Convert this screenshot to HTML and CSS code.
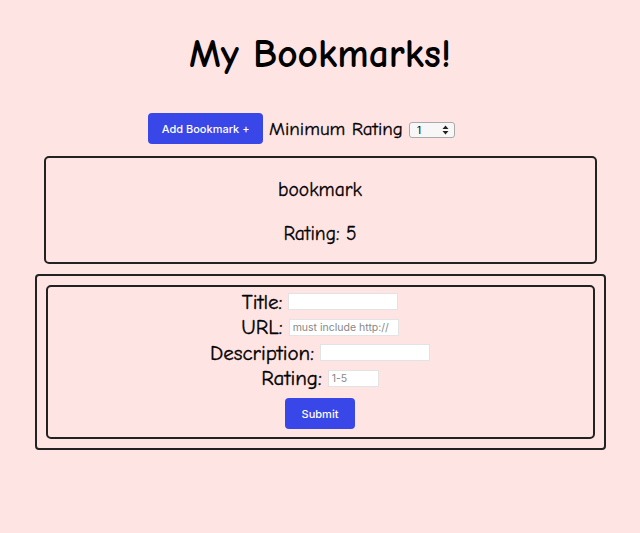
FILE: index.html
```html
<!DOCTYPE html>
<html>
<head>
<meta charset="utf-8">
<link rel="stylesheet" href="styles.css">
</head>
<body>
<div class="app">
  <h1 class="title">My Bookmarks!</h1>
  <div class="toolbar">
    <button class="btn btn-add">Add Bookmark +</button>
    <span class="filter-label">Minimum Rating</span>
    <span class="select"><span class="select-value">1</span><svg class="select-arrows" width="7" height="10" viewBox="0 0 7 10"><path d="M3.5 0.5 L6.5 4 H0.5 Z M3.5 9.5 L6.5 6 H0.5 Z" fill="#222"/></svg></span>
  </div>
  <div class="card">
    <div class="card-title">bookmark</div>
    <div class="card-rating">Rating: 5</div>
  </div>
  <div class="form-outer">
    <form class="form-inner">
      <div class="row"><label>Title:</label><span class="input w110"></span></div>
      <div class="row"><label>URL:</label><span class="input w110 ph">must include http://</span></div>
      <div class="row"><label>Description:</label><span class="input w110"></span></div>
      <div class="row"><label>Rating:</label><span class="input w51 ph">1-5</span></div>
      <button type="button" class="btn btn-submit">Submit</button>
    </form>
  </div>
</div>
</body>
</html>
```
FILE: styles.css
```css
html, body {
  margin: 0;
  padding: 0;
  background: #ffe4e4;
}
body {
  padding: 8px;
  font-family: "Comic Sans MS", "Comic Neue", "DejaVu Sans", sans-serif;
  color: #000;
}
.app {
  display: flex;
  flex-direction: column;
  align-items: center;
}
.title {
  margin: 22px 0 0;
  font-size: 39.5px;
  line-height: 48px;
  font-weight: bold;
}
.toolbar {
  margin-top: 35px;
  margin-right: 37px;
  display: flex;
  align-items: center;
  height: 31px;
}
.btn {
  background: #3946e8;
  color: #fff;
  border: none;
  border-radius: 4px;
  font-family: "Inter", "Liberation Sans", sans-serif;
  font-size: 11px;
  font-weight: 500;
  cursor: pointer;
  padding: 0;
}
.btn-add {
  width: 115px;
  height: 31px;
}
.filter-label {
  font-size: 19px;
  font-weight: 500;
  margin-left: 6px;
  line-height: 24px;
  -webkit-text-stroke: 0.3px #000;
}
.select {
  margin-left: 6px;
  margin-top: 2px;
  border: 1px solid #aaa;
  border-radius: 3px;
  background: #f7f7f7;
  display: flex;
  align-items: center;
  justify-content: space-between;
  padding: 0 5px 0 7px;
  box-sizing: border-box;
  width: 46px;
  height: 16px;
  font-family: "Inter", "Liberation Sans", sans-serif;
  font-size: 10px;
}
.card {
  margin-top: 12px;
  width: 553px;
  height: 108px;
  box-sizing: border-box;
  border: 2px solid #222;
  border-radius: 5px;
  display: flex;
  flex-direction: column;
  align-items: center;
  font-size: 19.5px;
  -webkit-text-stroke: 0.3px #000;
}
.card-title {
  margin-top: 19px;
  line-height: 26px;
}
.card-rating {
  margin-top: 18px;
  line-height: 26px;
}
.form-outer {
  margin-top: 10px;
  width: 571px;
  height: 176px;
  box-sizing: border-box;
  border: 2px solid #222;
  border-radius: 4px;
  padding: 9px 9px;
}
.form-inner {
  margin: 0;
  height: 154px;
  box-sizing: border-box;
  border: 2px solid #222;
  border-radius: 5px;
  display: flex;
  flex-direction: column;
  align-items: center;
  padding-top: 2px;
}
.row {
  display: flex;
  align-items: center;
  height: 25.5px;
  gap: 6px;
}
.row label {
  font-size: 21px;
  line-height: 24px;
  -webkit-text-stroke: 0.35px #000;
}
.input {
  display: block;
  height: 17px;
  box-sizing: border-box;
  border: 1px solid #e3e3e3;
  background: #fff;
  font-family: "Inter", "Liberation Sans", sans-serif;
  font-size: 10.5px;
  line-height: 15px;
  padding: 0 3px;
  color: #888;
  white-space: nowrap;
  overflow: hidden;
}
.w110 { width: 110px; }
.w51 { width: 51px; }
.btn-submit {
  margin-top: 7px;
  width: 70px;
  height: 31px;
}
```
